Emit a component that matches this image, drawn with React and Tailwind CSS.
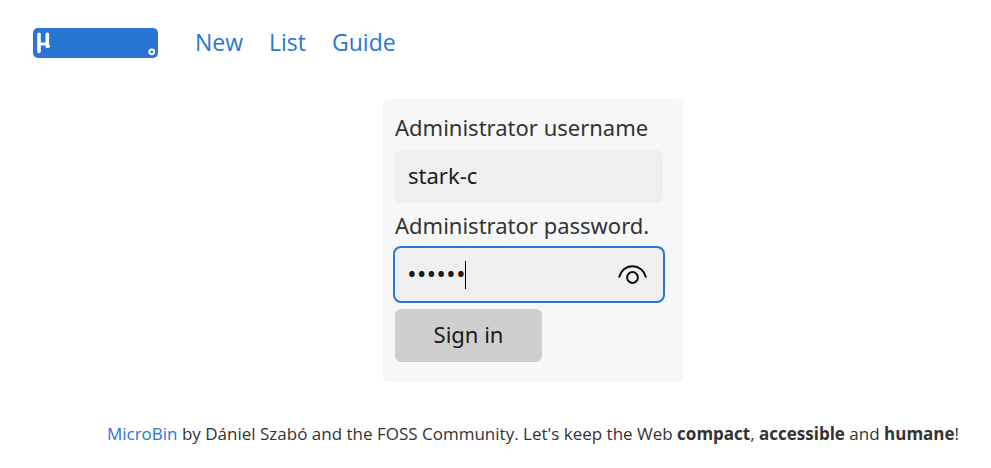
import { useState } from "react";

const links = ["New", "List", "Guide"];

const Logo = () => (
  <svg width="125" height="30" viewBox="0 0 125 30" aria-label="MicroBin">
    <rect width="125" height="30" rx="5" fill="#2975d4" />
    <g fill="none" stroke="#fff" strokeLinecap="round" strokeLinejoin="round">
      <path d="M6 6.200v17.300M14.300 6.200v12" strokeWidth="3.6" />
      <path d="M6 16h8M14.500 18.200h1" strokeWidth="3" />
      <circle cx="118.800" cy="23.800" r="2.4" strokeWidth="2" />
    </g>
  </svg>
);

const EyeIcon = () => (
  <svg
    width="30"
    height="20"
    viewBox="0 0 30 20"
    fill="none"
    stroke="#111"
    strokeWidth="2"
  >
    <path d="M2 13.500C3.600 6.800 9 2.200 15.500 2.200s11.900 4.600 13.500 11.300" />
    <circle cx="15.500" cy="13.500" r="5.4" />
  </svg>
);

const App = () => {
  const [username, setUsername] = useState("stark-c");
  const [password, setPassword] = useState("secret");
  const [visible, setVisible] = useState(false);

  return (
    <div className="bg-white pt-7 font-['Noto_Sans',sans-serif] text-[#333]">
      <header className="flex items-start pl-[33px]">
        <a href="#">
          <Logo />
        </a>
        <nav className="ml-[37px] flex gap-[26px] font-['Open_Sans',sans-serif] text-[23px] leading-7 text-[#2975d4]">
          {links.map((link) => (
            <a key={link} href="#">
              {link}
            </a>
          ))}
        </nav>
      </header>

      <main className="mt-[41px] pl-[75px]">
        <form
          onSubmit={(e) => e.preventDefault()}
          className="mx-auto w-[300px] rounded-md bg-[#f7f7f7] px-3 pt-3 pb-5 text-[22px]"
        >
          <label htmlFor="username" className="block leading-8 whitespace-nowrap">
            Administrator username
          </label>
          <input
            id="username"
            type="text"
            value={username}
            onChange={(e) => setUsername(e.target.value)}
            className="mt-[7px] block h-[53px] w-[268px] rounded-md bg-[#efefef] px-[13px] pb-[3px] text-[#1a1a1a] outline-none"
          />

          <label htmlFor="password" className="mt-[6px] block leading-8 whitespace-nowrap">
            Administrator password.
          </label>
          <div className="relative mt-[7px] w-[268px]">
            <input
              id="password"
              type={visible ? "text" : "password"}
              value={password}
              onChange={(e) => setPassword(e.target.value)}
              className="block h-[53px] w-full rounded-md bg-[#efefef] pr-12 pb-[3px] pl-3 font-['Open_Sans',sans-serif] text-[26px] text-[#1a1a1a] outline-2 outline-[#2975d4]"
            />
            <span className="absolute top-[13px] left-[70px] h-7 w-px bg-black" />
            <button
              type="button"
              aria-label="Show password"
              onClick={() => setVisible(!visible)}
              className="absolute top-4 right-4"
            >
              <EyeIcon />
            </button>
          </div>

          <button
            type="submit"
            className="mt-2 block h-[53px] w-[147px] rounded-md bg-[#cfcfcf] pb-[3px] text-[#1a1a1a]"
          >
            Sign in
          </button>
        </form>
      </main>

      <footer className="mt-10 pl-[75px] text-center font-['Open_Sans',sans-serif] text-[17px] leading-6 whitespace-nowrap">
        <a href="#" className="text-[#2975d4]">
          MicroBin
        </a>{" "}
        by Dániel Szabó and the FOSS Community. Let's keep the Web <b>compact</b>,{" "}
        <b>accessible</b> and <b>humane</b>!
      </footer>
    </div>
  );
};

export default App;
